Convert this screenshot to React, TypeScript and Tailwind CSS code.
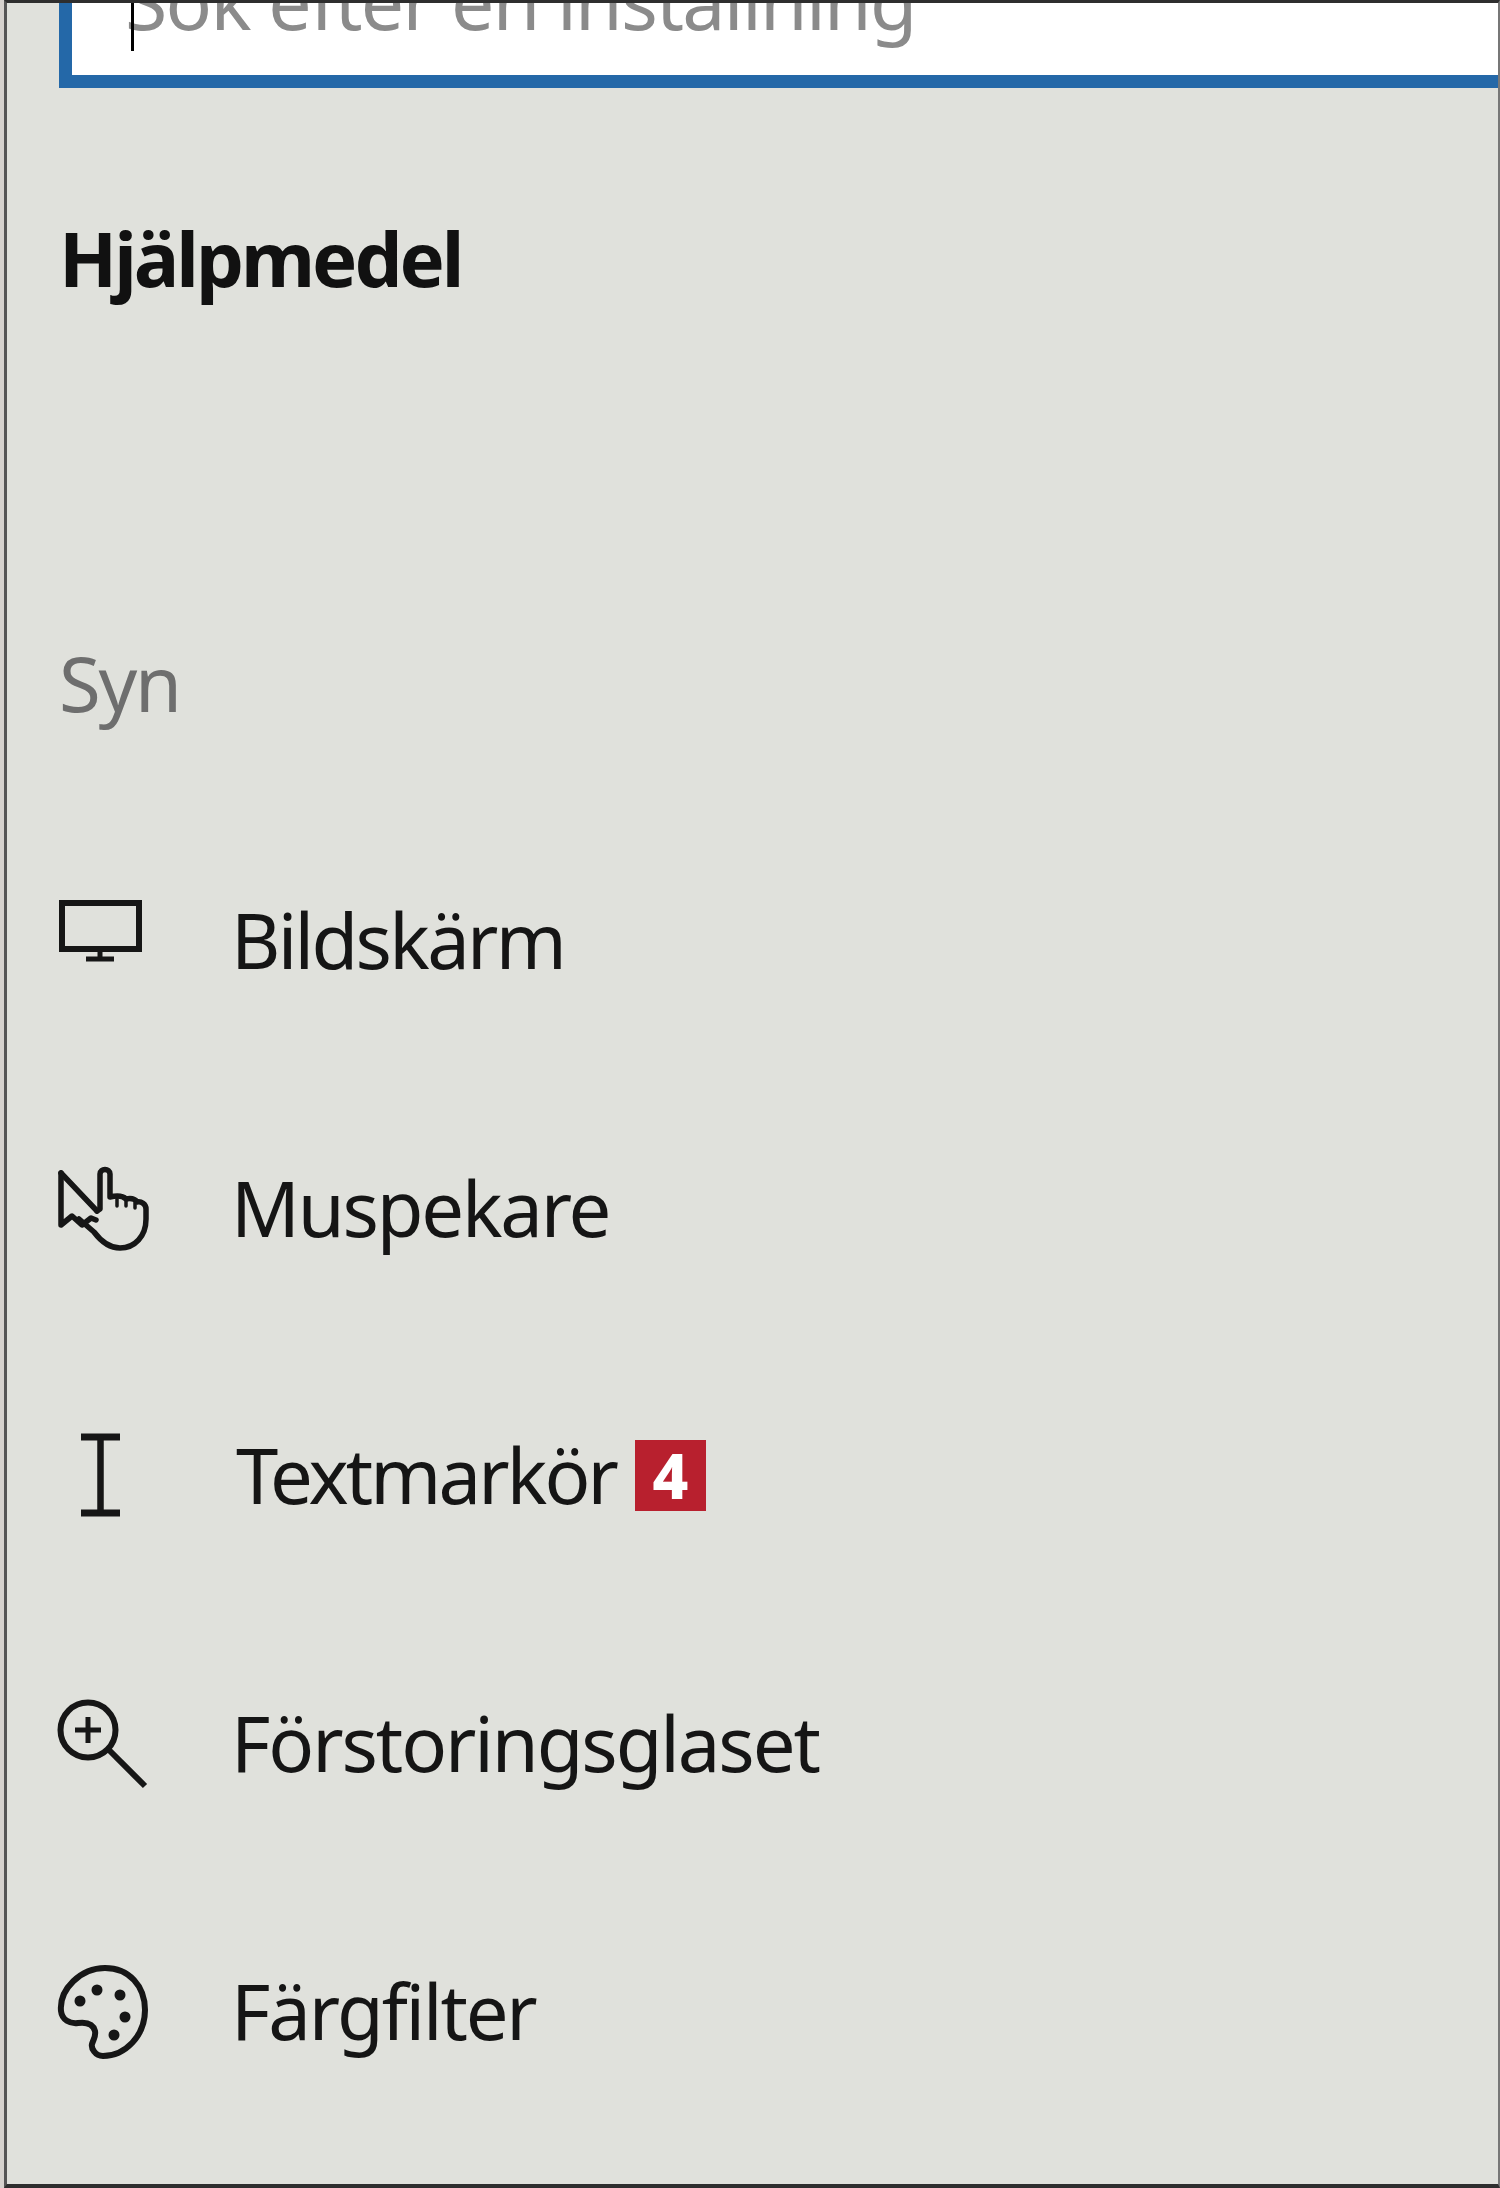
const font = { fontFamily: '"Noto Sans", "Open Sans", sans-serif' };

function Row({ icon, label, labelClass, badge }: { icon: React.ReactNode; label: string; labelClass: string; badge?: boolean }) {
  return (
    <div className="flex h-[267.7px] items-center">
      <div className="w-[172px] shrink-0">{icon}</div>
      <span className={"text-[76px] leading-none text-[#151515] " + labelClass}>{label}</span>
      {badge && (
        <span className="ml-[19px] flex h-[71px] w-[71px] items-center justify-center bg-[#b8202e] text-[62px] font-extrabold leading-none text-white">
          4
        </span>
      )}
    </div>
  );
}

const S = "block h-[100px] w-[100px] overflow-visible text-[#161616]";

const Monitor = (
  <svg viewBox="0 0 100 100" className={S} fill="none" stroke="currentColor">
    <rect x="3" y="13" width="77" height="46" strokeWidth="6" />
    <path d="M41 61v8M27 69h28" strokeWidth="5" />
  </svg>
);
const Pointer = (
  <svg viewBox="0 0 100 100" className={S} fill="none" stroke="currentColor" strokeWidth="5.500" strokeLinejoin="round" strokeLinecap="round">
    <path d="M2 15v52l11-9 10 9 9-7 5 2" />
    <path d="M2 15l36 38" />
    <path d="M38 53l3-2V16c0-6 10-6 10 0v23c9-2 14 0 16 2 5-1 9 0 11 3 4-1 9 2 9 7v10c0 17-11 29-26 29-12 0-20-8-26-16l-15-13" />
    <path d="M58 41v7M67 42v6M76 45v5" strokeWidth="3.500" />
  </svg>
);
const IBeam = (
  <svg viewBox="0 0 100 100" className={S} fill="none" stroke="currentColor">
    <path d="M22 12h39M22 88h39" strokeWidth="7" />
    <path d="M41.500 12v76" strokeWidth="6.500" />
  </svg>
);
const Magnifier = (
  <svg viewBox="0 0 100 100" className={S} fill="none" stroke="currentColor" strokeWidth="6">
    <circle cx="29" cy="37" r="27.500" />
    <path d="M29 24v26M16 37h26" strokeWidth="5" />
    <path d="M50 57l36 36" />
  </svg>
);
const Palette = (
  <svg viewBox="0 0 100 100" className={S} fill="none" stroke="currentColor">
    <path
      d="M2 50C0 28 22 7 46 7c24 0 40 18 40 42 0 26-20 46-42 46-8 0-12-8-11-12 2-6 4-8 3-13-2-8-9-9-17-8-8 1-16-3-17-12z"
      strokeWidth="6"
    />
    <g fill="currentColor" stroke="none">
      <circle cx="38" cy="29" r="5.500" />
      <circle cx="21" cy="40" r="5.500" />
      <circle cx="61" cy="34" r="5.500" />
      <circle cx="66" cy="56" r="5.500" />
      <circle cx="55" cy="74" r="5.500" />
    </g>
  </svg>
);

export default function App() {
  return (
    <div className="h-[2188px] w-[1500px] overflow-hidden bg-[#d6d2ce] pl-[4px] blur-[0.7px]" style={font}>
      <div className="h-full border-t-[3px] border-r-[2px] border-b-[4px] border-l-[3px] border-[#2e2e2e] border-r-[#777] border-l-[#555] bg-[#e0e1dc] pl-[52px]">
        <div className="relative flex h-[85px] items-end overflow-hidden border-b-[13px] border-l-[13px] border-[#2468a8] bg-white pl-[53px]">
          <div className="mb-[-2px] h-[70px] whitespace-nowrap text-[77px] leading-[70px] tracking-[-1.7px] text-[#8b8b8b] [transform:translateY(-41px)]">
            Sök efter en inställning
          </div>
          <div className="absolute top-0 left-[59px] h-[48px] w-[3px] bg-black" />
        </div>
        <h1 className="mt-[120px] text-[76px] font-bold leading-[100px] tracking-[-3px] text-[#111]">Hjälpmedel</h1>
        <div className="mt-[325px] text-[76px] leading-[100px] tracking-[-2.2px] text-[#6e6e6e]">Syn</div>
        <div className="mt-[73px]">
          <Row icon={Monitor} label="Bildskärm" labelClass="tracking-[-2.700px]" />
          <Row icon={Pointer} label="Muspekare" labelClass="tracking-[-2.200px]" />
          <Row icon={IBeam} label="Textmarkör" labelClass="ml-[5px] tracking-[-2.900px]" badge />
          <Row icon={Magnifier} label="Förstoringsglaset" labelClass="tracking-[-2.100px]" />
          <Row icon={Palette} label="Färgfilter" labelClass="tracking-[-2.200px]" />
        </div>
      </div>
    </div>
  );
}
